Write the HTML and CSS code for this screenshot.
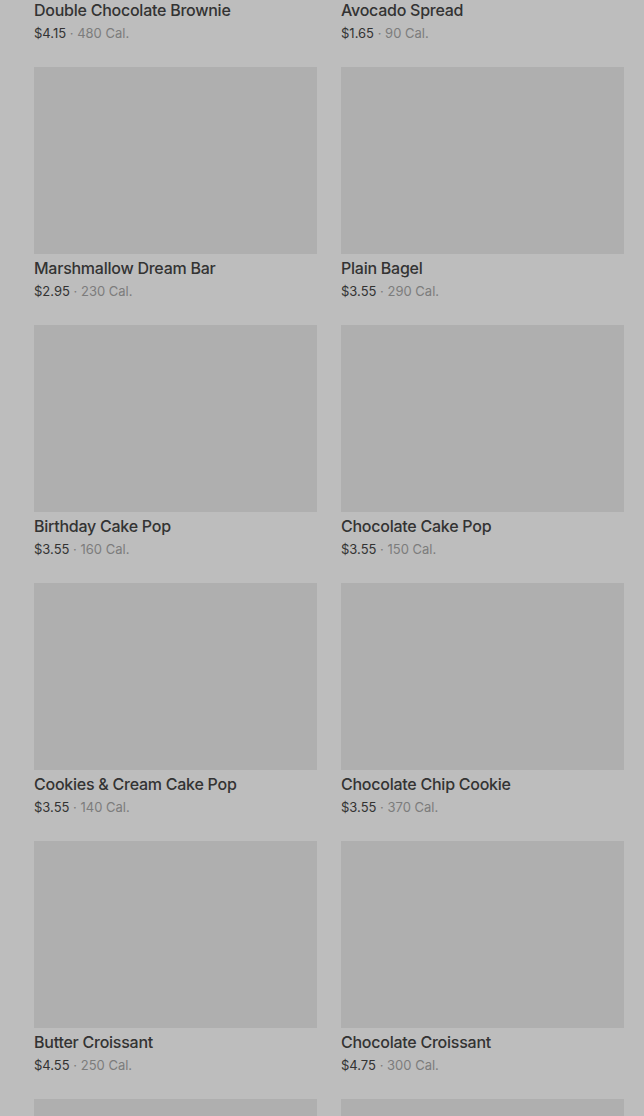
FILE: index.html
```html
<!DOCTYPE html>
<html lang="en">
<head>
  <meta charset="UTF-8" />
  <title>Bakery Menu</title>
  <meta name="viewport" content="width=device-width, initial-scale=1.0" />
  <link rel="stylesheet" href="styles.css">
</head>
<body>
  <div class="menu">

    <div class="item">
      <div class="photo"></div>
      <div class="name">Double Chocolate Brownie</div>
      <div class="meta"><span class="price">$4.15</span> · 480 Cal.</div>
    </div>
    <div class="item">
      <div class="photo"></div>
      <div class="name">Avocado Spread</div>
      <div class="meta"><span class="price">$1.65</span> · 90 Cal.</div>
    </div>

    <div class="item">
      <div class="photo"></div>
      <div class="name">Marshmallow Dream Bar</div>
      <div class="meta"><span class="price">$2.95</span> · 230 Cal.</div>
    </div>
    <div class="item">
      <div class="photo"></div>
      <div class="name">Plain Bagel</div>
      <div class="meta"><span class="price">$3.55</span> · 290 Cal.</div>
    </div>

    <div class="item">
      <div class="photo"></div>
      <div class="name">Birthday Cake Pop</div>
      <div class="meta"><span class="price">$3.55</span> · 160 Cal.</div>
    </div>
    <div class="item">
      <div class="photo"></div>
      <div class="name">Chocolate Cake Pop</div>
      <div class="meta"><span class="price">$3.55</span> · 150 Cal.</div>
    </div>

    <div class="item">
      <div class="photo"></div>
      <div class="name">Cookies &amp; Cream Cake Pop</div>
      <div class="meta"><span class="price">$3.55</span> · 140 Cal.</div>
    </div>
    <div class="item">
      <div class="photo"></div>
      <div class="name">Chocolate Chip Cookie</div>
      <div class="meta"><span class="price">$3.55</span> · 370 Cal.</div>
    </div>

    <div class="item">
      <div class="photo"></div>
      <div class="name">Butter Croissant</div>
      <div class="meta"><span class="price">$4.55</span> · 250 Cal.</div>
    </div>
    <div class="item">
      <div class="photo"></div>
      <div class="name">Chocolate Croissant</div>
      <div class="meta"><span class="price">$4.75</span> · 300 Cal.</div>
    </div>

    <div class="item">
      <div class="photo"></div>
    </div>
    <div class="item">
      <div class="photo"></div>
    </div>

  </div>
</body>
</html>
```

FILE: styles.css
```css
* {
  box-sizing: border-box;
}

html,
body {
  height: 100%;
  overflow: hidden;
}

body {
  margin: 0;
  background: #bdbdbd;
  font-family: Inter, "Noto Sans", sans-serif;
  color: #2e2e2e;
}

/* page is scrolled: first row's photo sits above the fold */
.menu {
  display: grid;
  grid-template-columns: 283px 283px;
  column-gap: 24px;
  row-gap: 25px;
  padding: 0 20px 0 34px;
  margin-top: -191px;
}

.photo {
  height: 187px;
  background: #afafaf;
}

.name {
  margin-top: 4px;
  font-size: 16px;
  line-height: 20px;
  font-weight: 500;
  letter-spacing: -0.25px;
  color: #333;
}

.meta {
  margin-top: 4px;
  font-size: 13px;
  line-height: 18px;
  color: #7c7c7c;
}

.price {
  color: #333;
}
```
